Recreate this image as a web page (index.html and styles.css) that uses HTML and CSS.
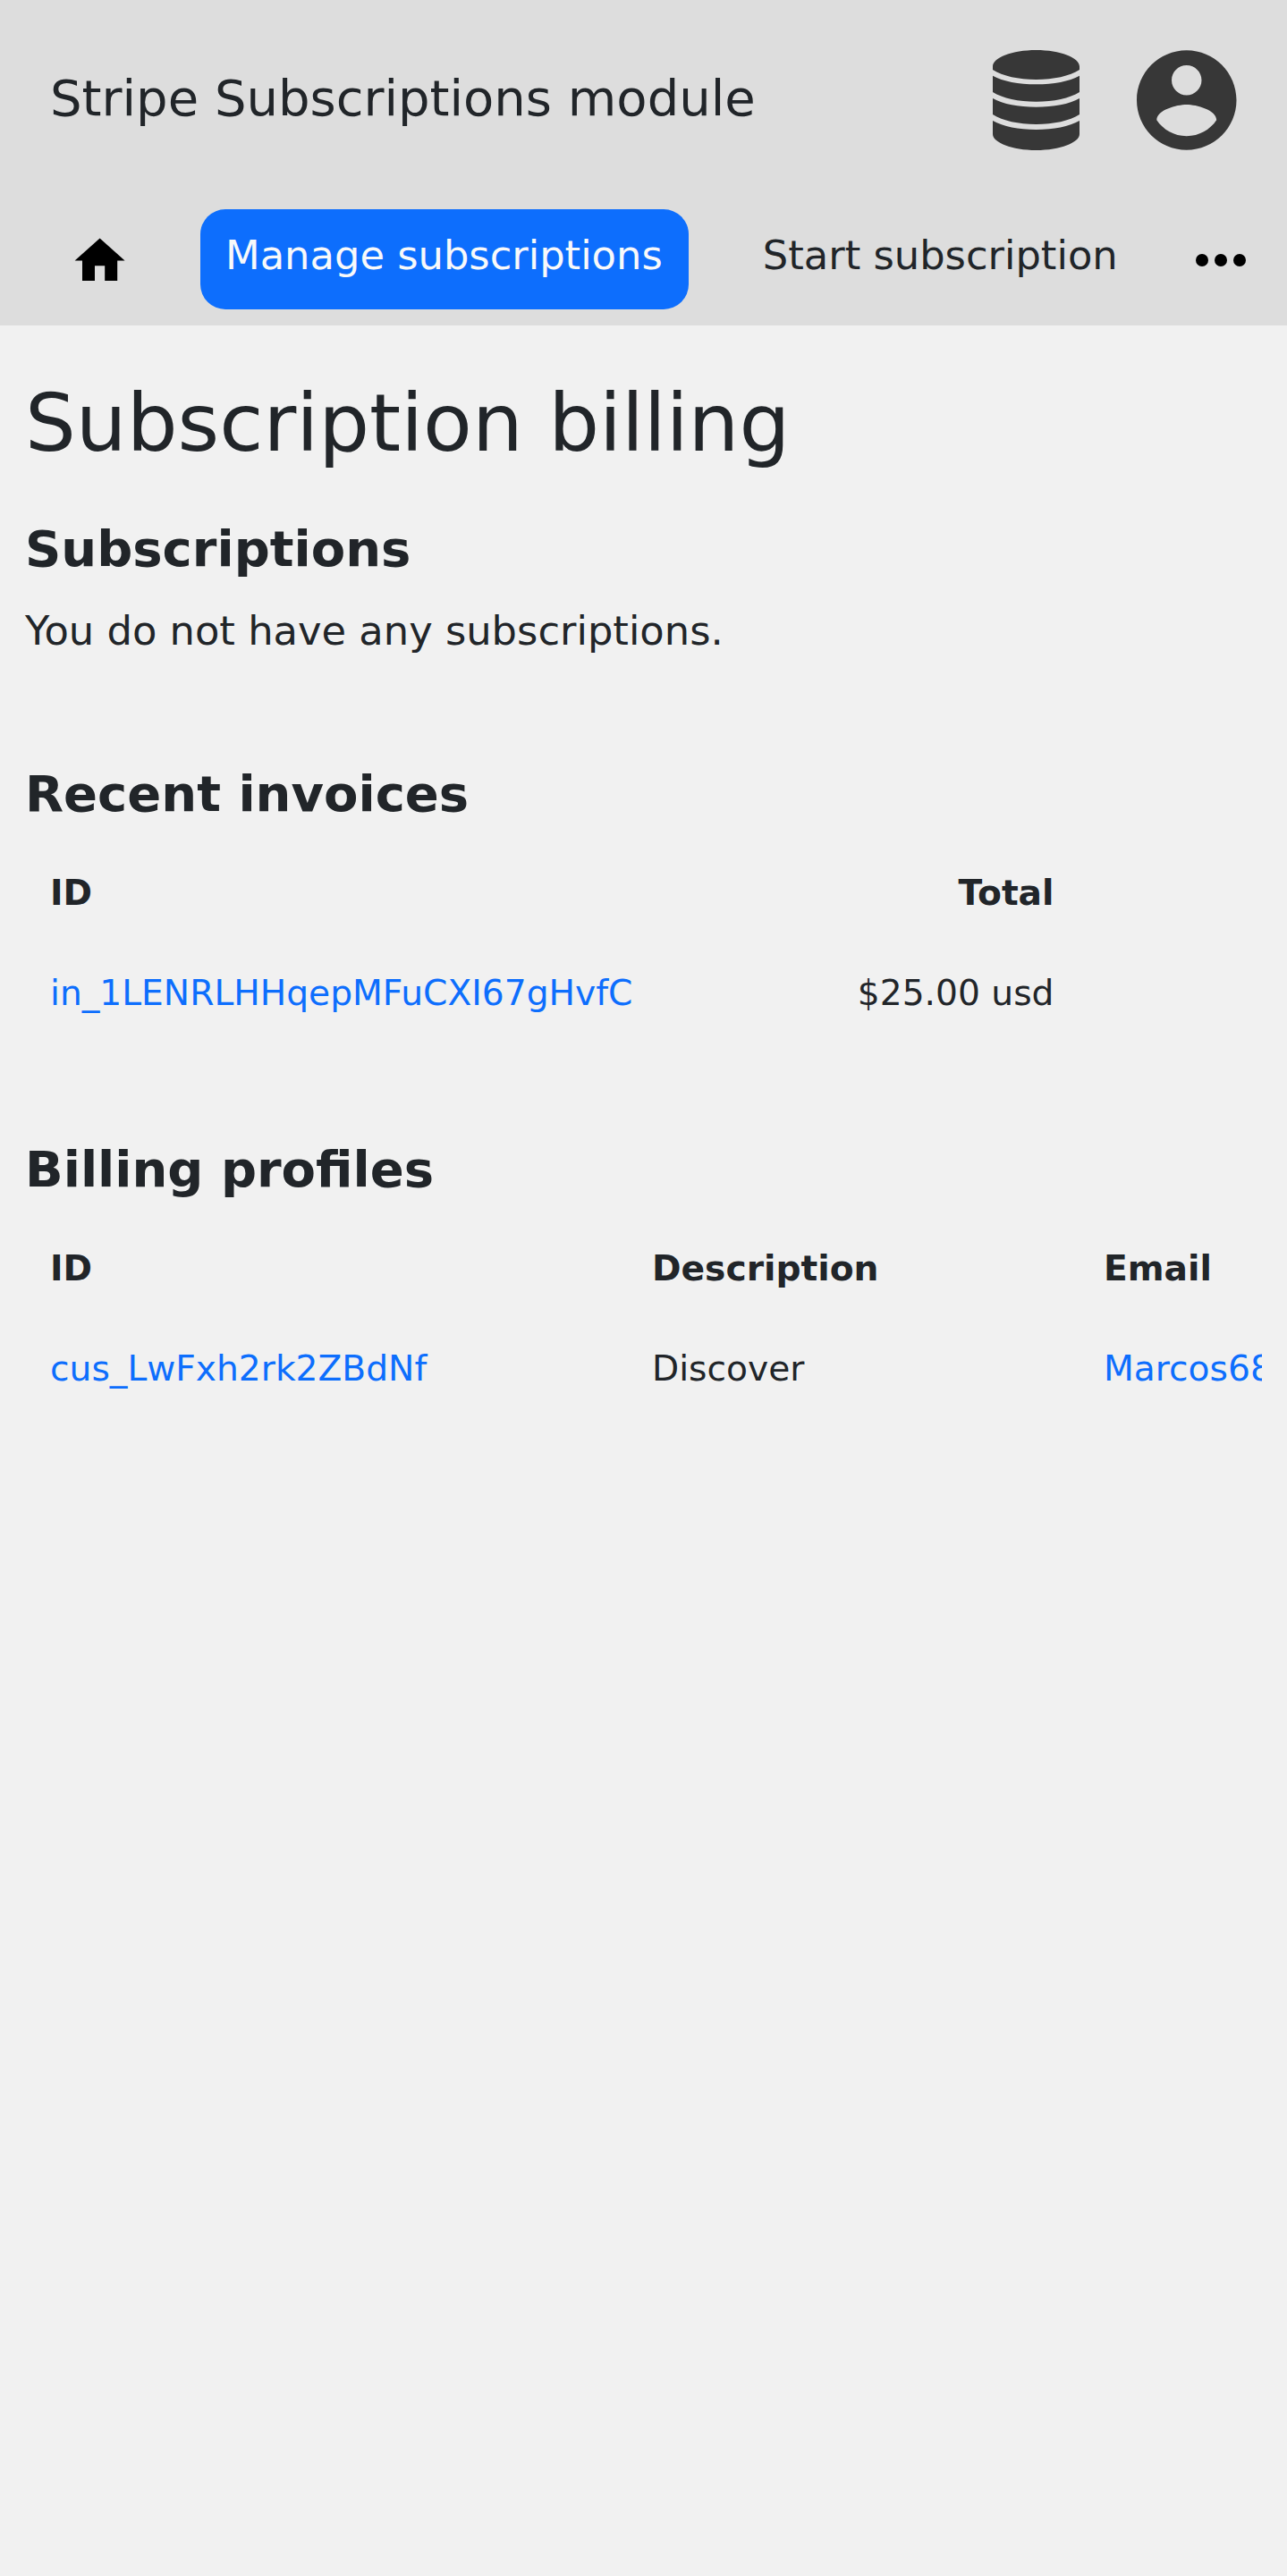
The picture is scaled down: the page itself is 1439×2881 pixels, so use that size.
FILE: index.html
```html
<!DOCTYPE html>
<html lang="en">
<head>
<meta charset="utf-8">
<title>Stripe Subscriptions module</title>
<link rel="stylesheet" href="styles.css">
</head>
<body>
<header class="header">
  <div class="topbar">
    <div class="brand">Stripe Subscriptions module</div>
    <svg class="icon-database" viewBox="0 0 291 336"><path d="M0 55C0 25 65 0 145.500 0S291 25 291 55V66C258 87 204 99 145.500 99S33 87 0 66zM0 86C35 105 86 115 145.500 115S256 105 291 86V141C258 162 204 173 145.500 173S33 162 0 141zM0 162C35 182 86 191 145.500 191S256 182 291 162V216C258 237 204 249 145.500 249S33 237 0 216zM0 237C35 257 86 267 145.500 267S256 257 291 237V282C291 310 226 336 145.500 336S0 310 0 282z"/></svg>
    <svg class="icon-account" viewBox="2 2 20 20"><path d="M12 2C6.480 2 2 6.480 2 12s4.480 10 10 10 10-4.480 10-10S17.520 2 12 2zm0 3c1.660 0 3 1.340 3 3s-1.340 3-3 3-3-1.340-3-3 1.340-3 3-3zm0 14.200c-2.500 0-4.710-1.280-6-3.220.03-1.990 4-3.080 6-3.080 1.990 0 5.970 1.090 6 3.080-1.290 1.940-3.500 3.220-6 3.220z"/></svg>
  </div>
  <nav class="nav">
    <a class="nav-home"><svg class="icon-home" viewBox="0 0 24 24"><path d="M10 20v-6h4v6h5v-8h3L12 3 2 12h3v8z"/></svg></a>
    <a class="nav-link active">Manage subscriptions</a>
    <a class="nav-link">Start subscription</a>
    <svg class="icon-more" viewBox="0 0 24 24"><circle cx="6" cy="12" r="2"/><circle cx="12" cy="12" r="2"/><circle cx="18" cy="12" r="2"/></svg>
  </nav>
</header>
<main class="content">
  <h1>Subscription billing</h1>
  <section class="section">
    <h2>Subscriptions</h2>
    <p>You do not have any subscriptions.</p>
  </section>
  <section class="section invoices">
    <h2>Recent invoices</h2>
    <div class="table">
      <div class="row head"><span>ID</span><span class="total">Total</span></div>
      <div class="row"><a>in_1LENRLHHqepMFuCXI67gHvfC</a><span class="total">$25.00 usd</span></div>
    </div>
  </section>
  <section class="section profiles">
    <h2>Billing profiles</h2>
    <div class="table">
      <div class="row head"><span>ID</span><span>Description</span><span>Email</span></div>
      <div class="row"><a>cus_LwFxh2rk2ZBdNf</a><span>Discover</span><a>Marcos68</a></div>
    </div>
  </section>
</main>
</body>
</html>
```

FILE: styles.css
```css
* { box-sizing: border-box; }
body {
  margin: 0;
  min-height: 2881px;
  background: #f1f1f1;
  color: #212529;
  font: 44.8px/67.2px "DejaVu Sans", sans-serif;
}
svg { display: block; flex: none; }
.header { height: 364px; background: #ddd; }
.topbar {
  display: flex;
  align-items: center;
  height: 224px;
  padding: 0 56.5px 0 56px;
}
.brand { flex: 1; font-size: 56px; line-height: 84px; padding-bottom: 4px; }
.icon-database { width: 97px; height: 112px; margin-right: 64px; fill: #373737; }
.icon-account { width: 111.5px; height: 112px; fill: #373737; }
.nav {
  display: flex;
  align-items: flex-start;
  padding: 10px 32px 0 0;
}
.nav-home { width: 224px; padding: 24px 0 0 78.4px; }
.icon-home { width: 67.2px; height: 67.2px; }
.nav-link {
  height: 112px;
  padding: 17.5px 28px;
  border-radius: 28px;
  white-space: nowrap;
}
.nav-link + .nav-link { margin-left: 55px; }
.active { padding-right: 29px; background: #0d6efd; color: #f8f9fa; }
.icon-more { width: 84px; height: 84px; margin: 14.5px 0 0 auto; }
.content { padding: 55.5px 28px 0; }
h1, h2, p { margin: 0; }
h1 { font-weight: 400; font-size: 89.6px; line-height: 107.5px; }
h2 { font-weight: 700; font-size: 56px; line-height: 67.2px; }
.section { padding-top: 53px; }
p { padding-top: 24.7px; }
.invoices { padding-top: 115px; }
.profiles { padding-top: 107.1px; }
.table { margin-top: 21.7px; overflow: hidden; }
.row {
  display: grid;
  height: 112px;
  align-items: center;
  font-size: 39.2px;
  line-height: 58.8px;
  white-space: nowrap;
}
.row > * { padding: 0 28px; }
.invoices .row { grid-template-columns: 763px 415.5px; }
.profiles .row { grid-template-columns: 673px 505px 400px; }
.head { font-weight: 700; }
.total { text-align: right; }
.row a { color: #0d6efd; }
```
